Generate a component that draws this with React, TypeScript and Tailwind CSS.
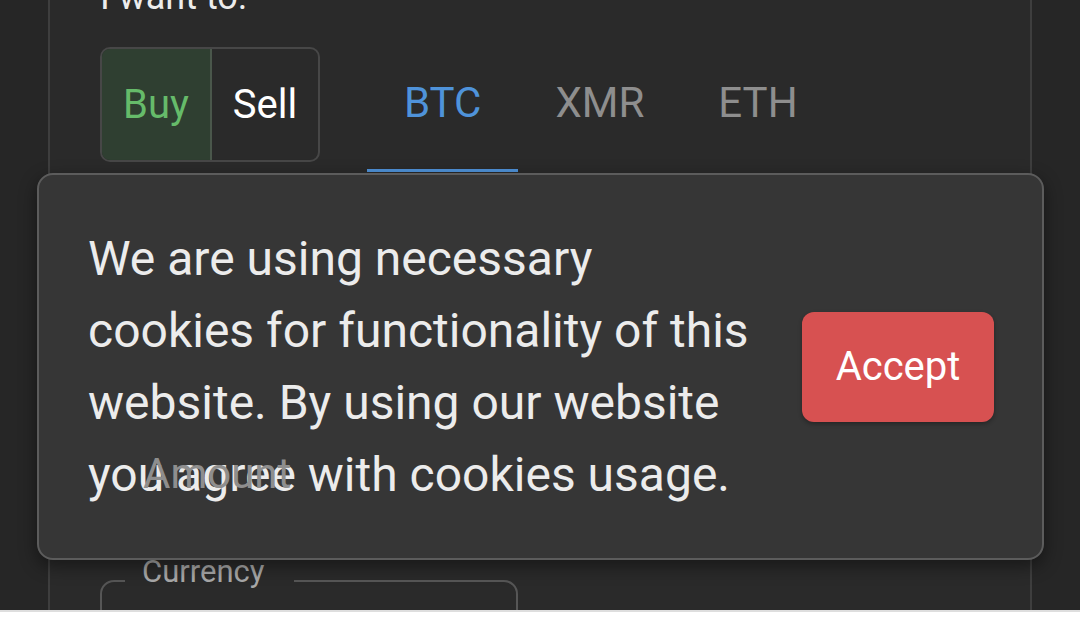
import React, { useState } from 'react'

const tabs = ['BTC', 'XMR', 'ETH']

export default function App() {
  const [side, setSide] = useState<'buy' | 'sell'>('buy')
  const [tab, setTab] = useState('BTC')
  const [accepted, setAccepted] = useState(false)

  return (
    <div
      className="relative flex h-[632px] w-[1080px] flex-col overflow-hidden bg-white"
      style={{ fontFamily: 'Roboto, "Noto Sans", Arial, sans-serif' }}
    >
      {/* Main area */}
      <div className="h-[610px] overflow-hidden bg-[#262626]">
        <div className="mx-[48px] flow-root h-full border-x-2 border-[#3e3e3e] bg-[#2a2a2a] pl-[50px]">
          <p className="mt-[-30px] text-[36px] leading-[54px] text-[#ececec]">I want to:</p>

          {/* Side toggle + currency tabs */}
          <div className="mt-[8px] flex items-start">
            <div className="mt-[15px] flex h-[115px] overflow-hidden rounded-[10px] border-2 border-[#474747] text-[40px]">
              <button
                onClick={() => setSide('buy')}
                className={`w-[110px] border-r-2 border-[#4a574b] ${
                  side === 'buy' ? 'bg-[#2f3f31] text-[#66bb6a]' : 'text-white'
                }`}
              >
                Buy
              </button>
              <button
                onClick={() => setSide('sell')}
                className={`w-[106px] ${side === 'sell' ? 'bg-[#3f2f2f] text-[#e57373]' : 'text-white'}`}
              >
                Sell
              </button>
            </div>

            <div className="ml-[47px] flex h-[140px]">
              {tabs.map((t) => (
                <button
                  key={t}
                  onClick={() => setTab(t)}
                  className={`flex items-center justify-center border-b-[3px] px-[37px] pt-[3px] text-[42px] ${
                    tab === t ? 'border-[#4f93da] text-[#4f93da]' : 'border-transparent text-[#8e8e8e]'
                  }`}
                >
                  {t}
                </button>
              ))}
            </div>
          </div>

          {/* Amount label (sits above the banner) */}
          <p className="relative z-20 mt-[282px] pl-[43px] text-[42px] leading-[40px] text-[#8e8e8e]">Amount</p>

          {/* Currency field */}
          <fieldset className="mt-[63px] h-[120px] w-[418px] rounded-[14px] border-2 border-[#565656] pl-[23px]">
            <legend className="pb-[18px] pl-[17px] pr-[30px] text-[31px] leading-[30px] text-[#a8a8a8]">
              Currency
            </legend>
          </fieldset>
        </div>
      </div>

      {/* Bottom strip */}
      <div className="flex-1 border-t-2 border-[#dedede] bg-white" />

      {/* Cookie banner */}
      {!accepted && (
        <div className="absolute left-[37px] top-[173px] z-10 flex h-[387px] w-[1007px] items-center rounded-[16px] border-2 border-[#5c5c5c] bg-[#363636] pl-[49px] pr-[48px] shadow-[0_6px_18px_rgba(0,0,0,0.45)]">
          <p className="w-[690px] whitespace-nowrap text-[48px] leading-[72px] text-[#ececec]">
            We are using necessary
            <br />
            cookies for functionality of this
            <br />
            website. By using our website
            <br />
            you agree with cookies usage.
          </p>
          <button
            onClick={() => setAccepted(true)}
            className="ml-auto h-[110px] w-[192px] rounded-[12px] bg-[#d75151] text-[40px] text-white shadow-[0_2px_4px_rgba(0,0,0,0.3)]"
          >
            Accept
          </button>
        </div>
      )}
    </div>
  )
}
